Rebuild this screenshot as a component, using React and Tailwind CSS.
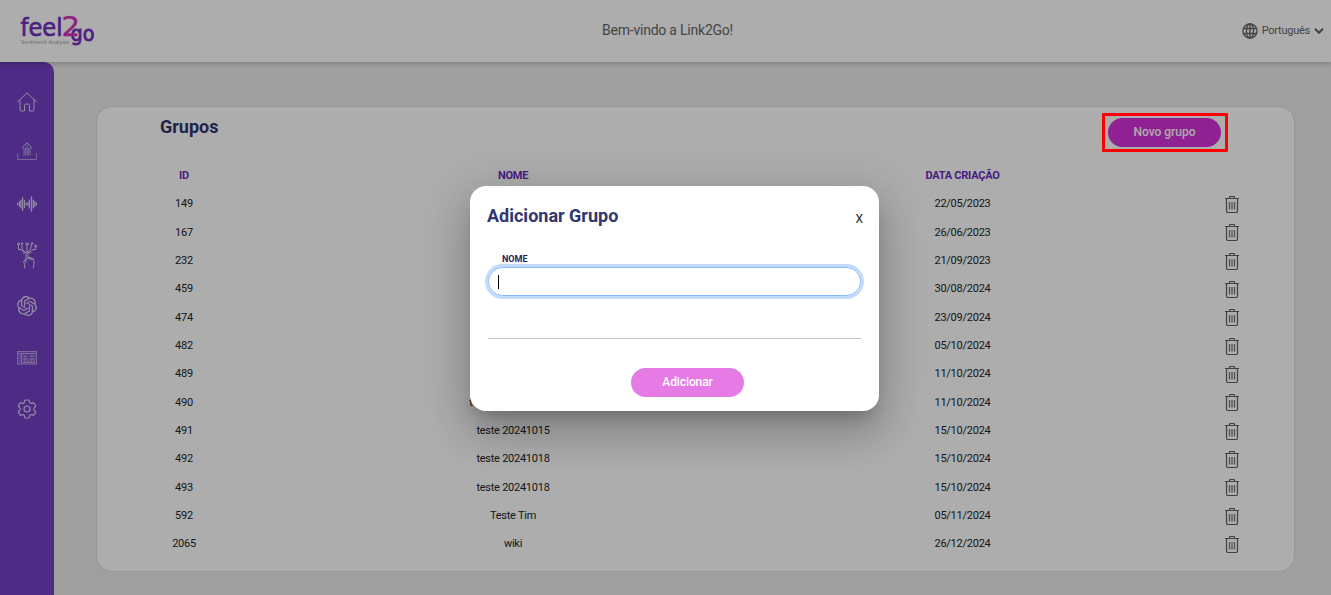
import React from "react";
import { HiOutlineCog6Tooth } from "react-icons/hi2";
import { SiOpenai } from "react-icons/si";

const groups = [
  { id: 149, name: "", date: "22/05/2023" },
  { id: 167, name: "", date: "26/06/2023" },
  { id: 232, name: "", date: "21/09/2023" },
  { id: 459, name: "", date: "30/08/2024" },
  { id: 474, name: "", date: "23/09/2024" },
  { id: 482, name: "", date: "05/10/2024" },
  { id: 489, name: "", date: "11/10/2024" },
  { id: 490, name: "teste 20241011 01", date: "11/10/2024" },
  { id: 491, name: "teste 20241015", date: "15/10/2024" },
  { id: 492, name: "teste 20241018", date: "15/10/2024" },
  { id: 493, name: "teste 20241018", date: "15/10/2024" },
  { id: 592, name: "Teste Tim", date: "05/11/2024" },
  { id: 2065, name: "wiki", date: "26/12/2024" },
];

const Logo = () => (
  <svg className="overflow-visible" width="80" height="36" viewBox="18 12 80 36" fontFamily="DejaVu Sans, sans-serif">
    <text x="20.500" y="34.500" fontSize="24.500" fill="#7030be" stroke="#7030be" strokeWidth=".7" textLength="42" lengthAdjust="spacingAndGlyphs">
      feel
    </text>
    <text x="70.500" y="39.500" fontSize="22" fill="#7030be" stroke="#7030be" strokeWidth=".8" textLength="24" lengthAdjust="spacingAndGlyphs">
      go
    </text>
    <text x="61.500" y="35" fontSize="27" fill="#d532b8" stroke="#d532b8" strokeWidth=".4" textLength="18.500" lengthAdjust="spacingAndGlyphs">
      2
    </text>
    <text x="21" y="42.700" fontSize="5.500" fill="#999" textLength="48" lengthAdjust="spacingAndGlyphs">
      Sentiment Analysis
    </text>
  </svg>
);

const HomeIcon = () => (
  <svg width="20" height="20" viewBox="0 0 20 20" fill="none" stroke="currentColor" strokeLinecap="round" strokeLinejoin="round">
    <path d="M.7 9.7 10 .8l9.300 8.900M3 8v9.800q0 1.200 1.200 1.200h3.300v-5.500q0-1.500 1.500-1.500h2q1.500 0 1.500 1.500V19h3.300q1.200 0 1.200-1.200V8" />
  </svg>
);

const UploadIcon = () => (
  <svg width="20" height="20" viewBox="0 0 20 20" fill="none" stroke="currentColor" opacity=".62">
    <path d="M.7 12v6.500h18.600V12M7 14.500V7H5l5-5.500L15 7h-2v7.500M10 14.500v-11M7.500 4.500 10 2l2.500 2.500M8.500 14.500V7M11.500 14.500V7" />
  </svg>
);

const WaveIcon = () => (
  <svg width="20" height="16" viewBox="0 0 20 16" fill="none" stroke="currentColor" strokeWidth="1.2" strokeLinecap="round">
    <path d="M.7 7v2M2.500 5.500v5M4 4v8M5.600 1.500v13M7.500 4.500v7M9.200 7v2M10.900 6.500v3M12.400 4v8M14.500.8v14.400M16.300 4v8M17.800 5.500v5M19.300 7v2" />
  </svg>
);

const TouchIcon = () => (
  <svg width="20" height="27" viewBox="0 0 20 27" fill="none" stroke="currentColor" strokeLinecap="round" strokeLinejoin="round">
    <path d="M1.500 3.500v4h2.500l3 3M5 2.800v4.200l3 3M10 3.800v6M14.500 2.800 13.500 7l-2 3M18.500 5v2.500h-2.500l-3 3M6.500 11q3.500-2.500 7 0" />
    <circle cx="1.500" cy="2" r="1" />
    <circle cx="5" cy="1.300" r=".6" />
    <circle cx="10" cy="2.200" r="1.200" />
    <circle cx="15" cy="1.500" r=".8" />
    <circle cx="18.500" cy="4" r=".9" />
    <path d="M9 20.500v-8q0-1.200 1-1.200t1 1.200V17M11 15.500h2v2.200M13 16h2v2M15 16.500q2 0 2 1.500v4q-.5 1-.5 4M9 17l-2 2q-.7 1 .7 3.500V26" />
  </svg>
);

const PanelIcon = () => (
  <svg width="20" height="14" viewBox="0 0 20 14" fill="none" stroke="currentColor" opacity=".62">
    <rect x=".5" y=".5" width="19" height="12.500" fill="currentColor" fillOpacity=".25" />
    <path d="M1 2.500h18M4.500 3v10M2 5h1.500M2 7.500h1.500M2 10h1.500M6.500 5.500h3M13 5h4.500M6 8h5M12.500 8H18M6 11.500h12M8 6.500v5M11 9v2M14 8v3M17 8v3" />
  </svg>
);

const GlobeIcon = () => (
  <svg width="16" height="16" viewBox="0 0 16 16" fill="none" stroke="currentColor" strokeWidth="1.400">
    <circle cx="8" cy="8" r="7.100" />
    <ellipse cx="8" cy="8" rx="3.600" ry="7.100" />
    <path d="M8 .8v14.400M1.500 5.500h13M1.500 10.500h13" />
  </svg>
);

const TrashIcon = () => (
  <svg width="14" height="17" viewBox="0 0 14 17" fill="none" stroke="#777">
    <path d="M0 2.500h14M4.500 2.500v-1q0-1 1-1h3q1 0 1 1v1M1.500 3v12q0 1.500 1.500 1.500h8q1.500 0 1.500-1.500V3" stroke="#606060" strokeWidth="1.200" />
    <path d="M4.500 6v7.500M7 6v7.500M9.500 6v7.500" strokeWidth="1.300" />
  </svg>
);

const Header = () => (
  <header className="relative z-10 flex h-[62px] items-center justify-between bg-white pr-[7px] pl-[18px] text-[#666] shadow-[0_2px_5px_rgba(0,0,0,0.2)]">
    <div className="w-[200px]">
      <Logo />
    </div>
    <h1 className="ml-[-7px] pb-0.5 text-sm tracking-[-0.22px]">Bem-vindo a Link2Go!</h1>
    <div className="flex w-[200px] items-center justify-end text-[11px]">
      <GlobeIcon />
      <span className="ml-1 tracking-[-0.25px]">Português</span>
      <svg className="ml-1" width="10" height="8" viewBox="0 0 10 8" fill="none" stroke="currentColor" strokeWidth="2.200">
        <path d="m1 1.800 4 4 4-4" />
      </svg>
    </div>
  </header>
);

const Sidebar = () => (
  <nav className="flex w-[54px] shrink-0 flex-col items-center rounded-tr-[10px] bg-[#7441c4] pt-[15px] text-white/75">
    <div className="flex h-[50px] items-center"><HomeIcon /></div>
    <div className="flex h-[47px] items-center"><UploadIcon /></div>
    <div className="flex h-[60px] items-center"><WaveIcon /></div>
    <div className="flex h-[42px] items-center"><TouchIcon /></div>
    <div className="flex h-[60px] items-center"><SiOpenai size={20} /></div>
    <div className="flex h-[43px] items-center"><PanelIcon /></div>
    <div className="flex h-[59px] items-center"><HiOutlineCog6Tooth size={24} strokeWidth={1.2} /></div>
  </nav>
);

const GroupsCard = () => (
  <section className="h-[466px] w-[1199px] rounded-2xl border border-[#dcdcdc] bg-white">
    <div className="flex items-start justify-between pt-[10px] pr-[73px] pl-[63px]">
      <h2 className="text-lg leading-[19px] font-bold text-[#30366f]">Grupos</h2>
      <button className="mt-px h-[29px] w-[113px] rounded-full bg-[#d532d7] pb-px text-xs font-medium text-white">
        Novo grupo
      </button>
    </div>
    <div className="mt-[15px] grid h-[28.4px] grid-cols-[174px_484px_415px_123px] items-center text-center text-[11px] font-bold tracking-[-0.25px] text-[#6c2bc0]">
      <span>ID</span>
      <span>NOME</span>
      <span>DATA CRIAÇÃO</span>
    </div>
    {groups.map(({ id, name, date }) => (
      <div
        key={id}
        className="grid h-[28.33px] grid-cols-[174px_484px_415px_123px] items-center text-center text-[11px] tracking-[-0.25px] text-[#212529]"
      >
        <span>{id}</span>
        <span>{name}</span>
        <span>{date}</span>
        <span className="flex justify-center">
          <TrashIcon />
        </span>
      </div>
    ))}
  </section>
);

const AddGroupDialog = () => (
  <div className="absolute top-[186px] left-[470px] z-30 h-[225px] w-[409px] rounded-2xl bg-white px-[18px] pt-5 shadow-[0_11px_15px_-7px_rgba(0,0,0,0.2),0_24px_38px_3px_rgba(0,0,0,0.14),0_9px_46px_8px_rgba(0,0,0,0.12)]">
    <div className="flex justify-between">
      <h2 className="-ml-px text-lg leading-5 font-bold text-[#30366f]">Adicionar Grupo</h2>
      <button className="mt-[3px] mr-[-2px] h-5 text-xs text-[#212529]">X</button>
    </div>
    <label className="mt-[23px] ml-[14px] block text-[9px] leading-[14px] font-bold text-[#20265f]">NOME</label>
    <div className="mt-px flex h-[29px] items-center rounded-full border border-[#86b7fe] px-[9px] shadow-[0_0_0_3px_#c2dbfe]">
      <span className="h-[14px] w-px bg-black" />
    </div>
    <hr className="mt-[42px] border-[#c4c4c4]" />
    <button className="mx-auto mt-[29px] block h-[29px] w-[113px] translate-x-[13px] rounded-full bg-[#e67be5] pb-px text-xs font-medium tracking-[-0.1px] text-white">
      Adicionar
    </button>
  </div>
);

const App = () => (
  <div className="relative flex h-[595px] w-full flex-col overflow-hidden bg-[#ebebeb] font-[Roboto,sans-serif]">
    <Header />
    <div className="flex flex-1">
      <Sidebar />
      <main className="pt-[44px] pl-[42px]">
        <GroupsCard />
      </main>
    </div>
    <div className="absolute inset-0 z-20 bg-black/32" />
    <AddGroupDialog />
    <div className="absolute top-[113px] left-[1102px] z-40 h-[39px] w-[126px] rounded-[1px] border-3 border-[#ff0000]" />
  </div>
);

export default App;
